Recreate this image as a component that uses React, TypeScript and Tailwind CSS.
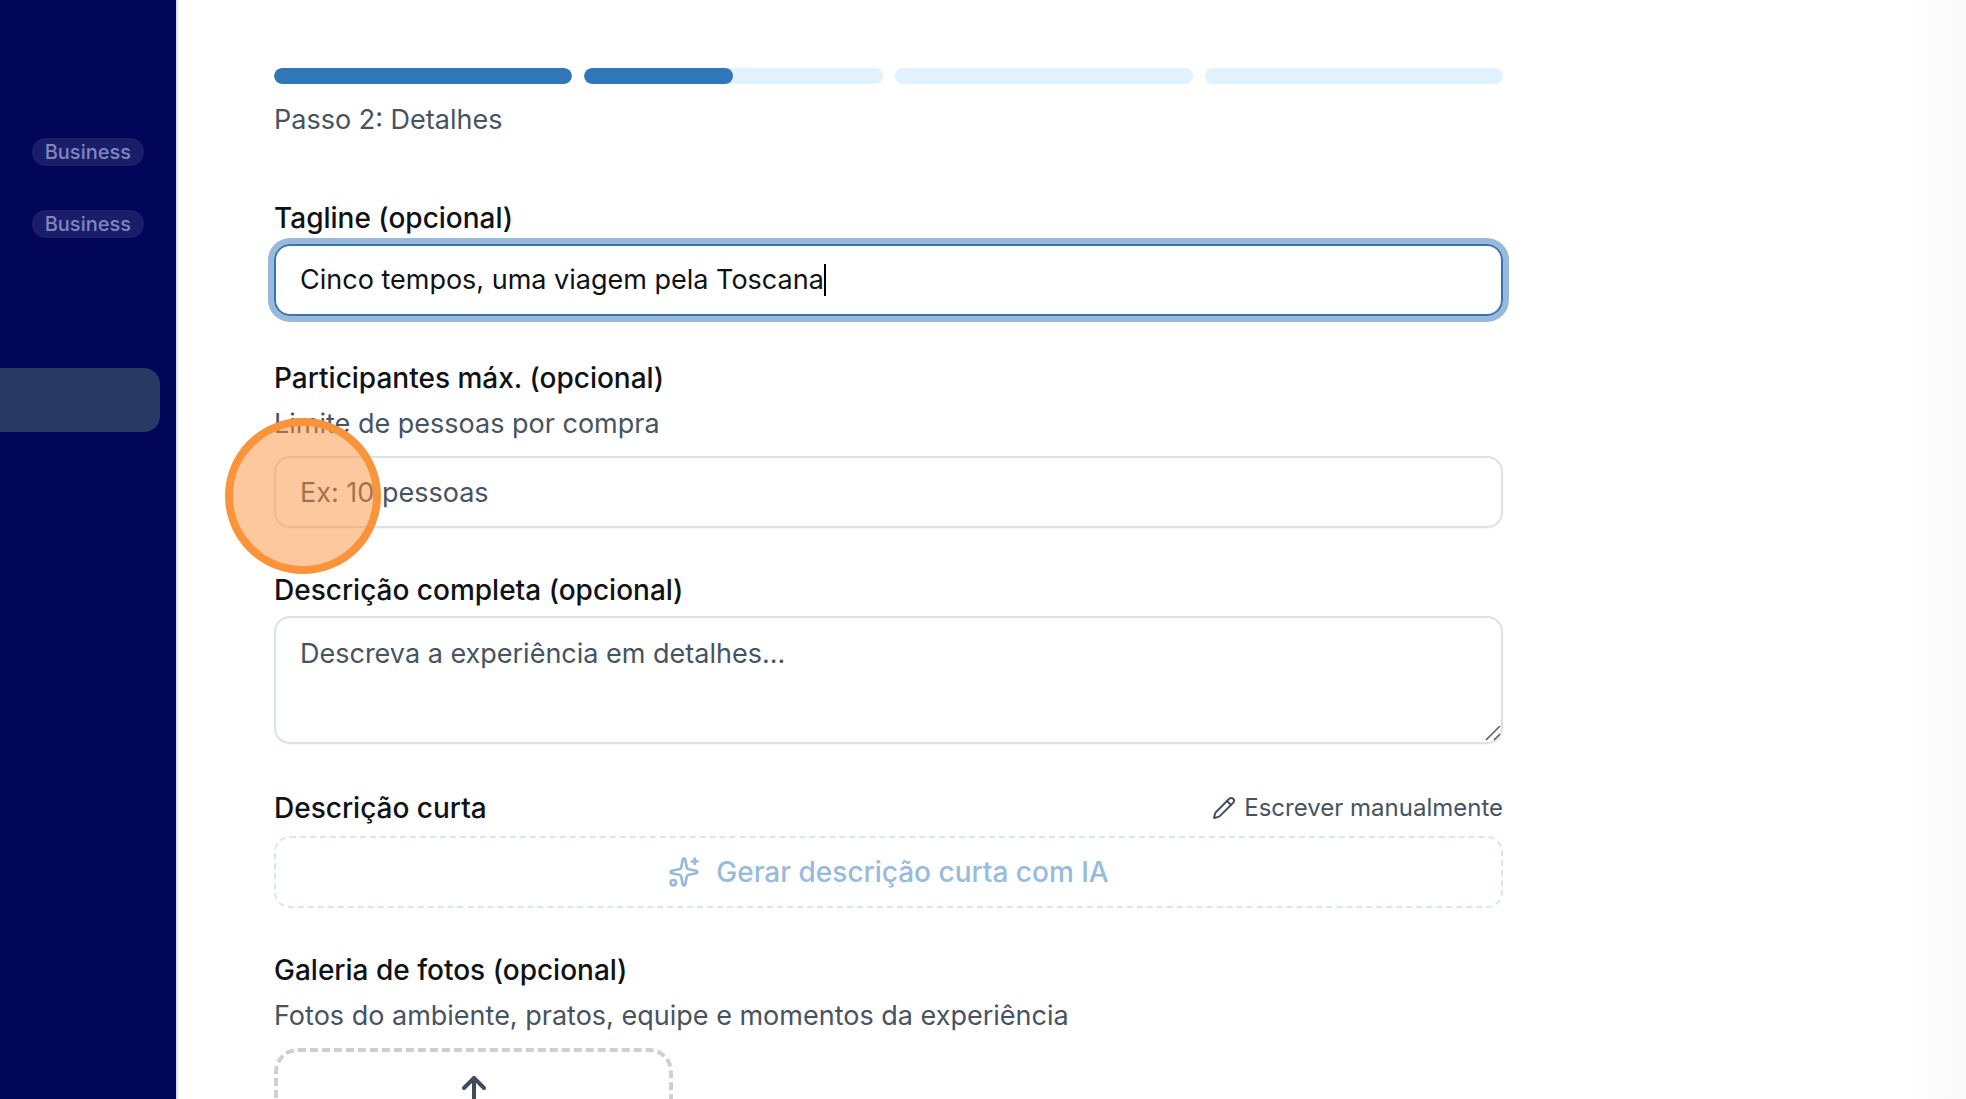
import { useState } from "react";
import { Pencil, Sparkles, Upload } from "lucide-react";

const steps = [100, 50, 0, 0];

const labelClass = "block text-[28px] leading-7 font-medium text-[#101214]";
const hintClass = "text-[27px] leading-10 text-[#475360]";

function Sidebar() {
  return (
    <aside className="shrink-0 w-[178px] pt-[120px] pr-4 bg-[#000558] border-r-2 border-[#d5defb]">
      <nav className="flex flex-col gap-2">
        <div className="flex items-center justify-end h-16 px-4">
          <span className="px-[13px] rounded-full bg-[#191d6a] text-[20px] leading-7 font-medium text-[#7f86bf]">
            Business
          </span>
        </div>
        <div className="flex items-center justify-end h-16 px-4">
          <span className="px-[13px] rounded-full bg-[#191d6a] text-[20px] leading-7 font-medium text-[#7f86bf]">
            Business
          </span>
        </div>
        <div className="h-16 mt-26 rounded-r-2xl bg-[#283964]"></div>
      </nav>
    </aside>
  );
}

function Progress() {
  return (
    <div>
      <div className="flex gap-3">
        {steps.map((value, i) => (
          <div
            key={i}
            className="flex-1 h-4 rounded-full bg-[#e1f1fd] overflow-hidden"
          >
            <div
              className="h-full rounded-full bg-[#3077b9]"
              style={{ width: `${value}%` }}
            ></div>
          </div>
        ))}
      </div>
      <p className={`mt-4 ${hintClass}`}>Passo 2: Detalhes</p>
    </div>
  );
}

export default function App() {
  const [tagline, setTagline] = useState("Cinco tempos, uma viagem pela Toscana");

  return (
    <div className="flex h-screen overflow-hidden bg-white font-['Inter',sans-serif]">
      <Sidebar />

      <main className="flex-1 pl-24 pt-[68px]">
        <form className="w-full max-w-[1229px]">
          <Progress />

          <div className="flex flex-col gap-12 mt-16">
            <div className="flex flex-col gap-3">
              <label htmlFor="tagline" className={labelClass}>
                Tagline (opcional)
              </label>
              <div className="flex items-center h-18 px-6 rounded-2xl border-2 border-[#3a74ad] ring-6 ring-[#97b9dc]">
                <input
                  id="tagline"
                  type="text"
                  value={tagline}
                  onChange={(e) => setTagline(e.target.value)}
                  className="field-sizing-content max-w-full text-[27px] leading-10 text-[#101214] caret-transparent outline-none"
                />
                <span className="w-0.5 h-8 bg-black"></span>
              </div>
            </div>

            <div className="flex flex-col gap-3">
              <label htmlFor="participants" className={labelClass}>
                Participantes máx. (opcional)
              </label>
              <p className={hintClass}>Limite de pessoas por compra</p>
              <div className="relative">
                <input
                  id="participants"
                  type="text"
                  placeholder="Ex: 10 pessoas"
                  className="block w-full h-18 px-6 rounded-2xl border-2 border-[#d9e2e9] shadow-xs text-[27px] leading-10 text-[#101214] placeholder:text-[#475360] outline-none"
                />
                {/* click marker */}
                <span className="absolute -left-[49px] -top-[38px] size-[156px] rounded-full border-8 border-[#fa9339] bg-[#fb923c]/50 pointer-events-none"></span>
              </div>
            </div>

            <div className="flex flex-col gap-3">
              <label htmlFor="description" className={labelClass}>
                Descrição completa (opcional)
              </label>
              <div className="relative">
                <textarea
                  id="description"
                  placeholder="Descreva a experiência em detalhes..."
                  className="block w-full h-32 px-6 py-4 rounded-2xl border-2 border-[#d9e2e9] shadow-xs resize-none text-[27px] leading-10 text-[#101214] placeholder:text-[#475360] outline-none"
                ></textarea>
                <svg
                  className="absolute right-0.5 bottom-0.5 size-4 text-[#565b60] pointer-events-none"
                  viewBox="0 0 16 16"
                  fill="none"
                  stroke="currentColor"
                  strokeWidth="1.5"
                >
                  <path d="M1 14 15 0M9 14l6-6" />
                </svg>
              </div>
            </div>

            <div className="flex flex-col gap-3">
              <div className="flex items-center justify-between h-8">
                <h2 className={labelClass}>Descrição curta</h2>
                <button
                  type="button"
                  className="flex items-center gap-2 text-2xl leading-8 text-[#475360]"
                >
                  <Pencil className="size-6" />
                  Escrever manualmente
                </button>
              </div>
              <button
                type="button"
                className="flex items-center justify-center gap-4 w-full h-18 rounded-2xl border-2 border-dashed border-[#d9e6ec] text-[28px] leading-10 font-medium text-[#98bbdc]"
              >
                <Sparkles className="size-8" />
                Gerar descrição curta com IA
              </button>
            </div>

            <div className="flex flex-col gap-3">
              <h2 className={labelClass}>Galeria de fotos (opcional)</h2>
              <p className={hintClass}>
                Fotos do ambiente, pratos, equipe e momentos da experiência
              </p>
              <div className="grid grid-cols-3 gap-4">
                <button
                  type="button"
                  aria-label="Adicionar fotos"
                  className="flex justify-center h-48 pt-5 rounded-3xl border-4 border-dashed border-[#cfcfcf] text-[#3f4c5c]"
                >
                  <Upload className="size-12" />
                </button>
              </div>
            </div>
          </div>
        </form>
      </main>

      <div className="shrink-0 w-14 bg-linear-to-r from-white to-[#f9f9f9]"></div>
    </div>
  );
}
